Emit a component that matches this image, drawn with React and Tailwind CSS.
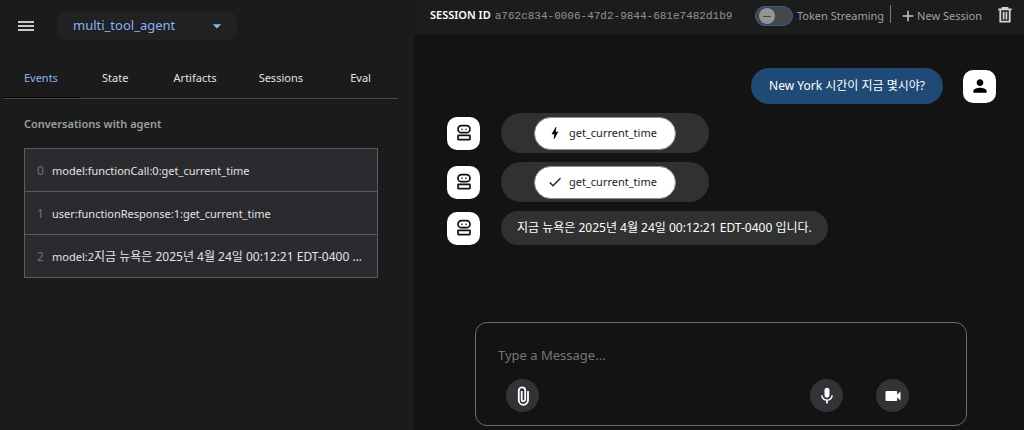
import React, { useState } from "react";
import { MdBolt, MdCheck, MdPerson, MdMic, MdVideocam, MdAdd, MdArrowDropDown } from "react-icons/md";

const TABS = [
  { name: "Events", width: "w-[76px]" },
  { name: "State", width: "w-[73px]" },
  { name: "Artifacts", width: "w-[87px]" },
  { name: "Sessions", width: "w-[85px]" },
  { name: "Eval", width: "w-[75px]" },
];

const EVENTS = [
  { source: "model:functionCall:0:get_current_time" },
  { source: "user:functionResponse:1:get_current_time" },
  { source: "model:2", message: "지금 뉴욕은 2025년 4월 24일 00:12:21 EDT-0400 ..." },
];

function RobotIcon() {
  return (
    <svg viewBox="0 0 16 18" className="h-[18px] w-4" fill="none" stroke="#111" strokeWidth="1.7" aria-hidden="true">
      <rect x="2" y="1.7" width="12" height="7" rx="3.5" />
      <rect x="2" y="11.4" width="12" height="4.2" rx="0.5" />
      <circle cx="6" cy="5.2" r="0.8" fill="#111" stroke="none" />
      <circle cx="10" cy="5.2" r="0.8" fill="#111" stroke="none" />
    </svg>
  );
}

function TrashIcon() {
  return (
    <svg viewBox="0 0 14 16" className="h-4 w-3.5" fill="none" stroke="#d6d6d6" strokeWidth="1.8" aria-hidden="true">
      <path d="M0.3 2.3H13.7M4.5 1.6V0.9H9.5V1.6M2.3 2.5V14.7H11.7V2.5M5.6 4.8V12.4M8.4 4.8V12.4" />
    </svg>
  );
}

function PaperclipIcon() {
  return (
    <svg viewBox="0 0 20 20" className="size-5" fill="none" stroke="currentColor" strokeWidth="1.8" aria-hidden="true">
      <path d="M15 5V14.2A4.6 4.6 0 0 1 5.8 14.2V4.6A3.2 3.2 0 0 1 12.2 4.6V13.4A1.75 1.75 0 0 1 8.7 13.4V5" />
    </svg>
  );
}

function Avatar({ children }) {
  return (
    <div className="flex size-[33px] shrink-0 items-center justify-center rounded-[10px] bg-white text-black">
      {children}
    </div>
  );
}

function ToolCall({ icon }) {
  return (
    <div className="flex items-center gap-[21px]">
      <Avatar><RobotIcon /></Avatar>
      <div className="flex h-10 items-center rounded-[20px] bg-[#303231] px-[33px]">
        <button type="button" className="flex h-[33px] w-[142px] items-center gap-1.5 rounded-full border border-[#8e8e8e] bg-white pl-3 text-[11px] text-[#222]">
          {icon}
          get_current_time
        </button>
      </div>
    </div>
  );
}

function RoundButton({ label, children }) {
  return (
    <button type="button" aria-label={label} className="flex size-[33px] items-center justify-center rounded-full bg-[#323336] text-white">
      {children}
    </button>
  );
}

export default function App() {
  const [tab, setTab] = useState("Events");
  return (
    <div className="flex min-h-screen bg-[#131313] font-['Noto_Sans','Noto_Sans_CJK_KR',sans-serif] text-[11px] text-[#e3e3e3]">
      <aside className="w-[414px] shrink-0 bg-[#1b1b1b]">
        <div className="flex items-center gap-[23px] pt-3 pl-[18px]">
          <button type="button" aria-label="Toggle side panel" className="flex w-4 flex-col gap-[2px]">
            <span className="h-[2px] w-full bg-[#c8c8c8]" />
            <span className="h-[2px] w-full bg-[#c8c8c8]" />
            <span className="h-[2px] w-full bg-[#c8c8c8]" />
          </button>
          <div className="relative">
            <select aria-label="Agent" className="h-7 w-[180px] appearance-none rounded-lg bg-[#212121] pl-4 text-[13px] text-[#8ab0f5]">
              <option>multi_tool_agent</option>
            </select>
            <MdArrowDropDown className="pointer-events-none absolute top-1 right-[10px] size-5 text-[#8ab4f8]" />
          </div>
        </div>

        <div role="tablist" className="mt-[17px] mr-4 ml-[3px] flex border-b border-[#444746]">
          {TABS.map((t) => (
            <button
              key={t.name}
              type="button"
              role="tab"
              aria-selected={tab === t.name}
              onClick={() => setTab(t.name)}
              className={`h-[41px] border-b pt-[2px] ${t.width} ${tab === t.name ? "border-black text-[#8ab0f5]" : "border-transparent"}`}
            >
              {t.name}
            </button>
          ))}
        </div>

        <h2 className="mt-[15px] ml-6 leading-5 font-semibold text-[#9aa0a6]">Conversations with agent</h2>
        <ol className="mt-[14px] mr-9 ml-6 border border-[#5c5c60]">
          {EVENTS.map((event, i) => (
            <li key={event.source} className="border-[#5c5c60] not-first:border-t">
              <button type="button" className="flex h-[42px] w-full items-center bg-[#2b2a2f] pt-[2px] pl-3 text-left whitespace-nowrap">
                <span className="w-[15px] text-xs text-[#70757a]">{i}</span>
                <span>
                  {event.source}
                  {event.message && <span className="text-xs">{event.message}</span>}
                </span>
              </button>
            </li>
          ))}
        </ol>
      </aside>

      <main className="flex min-w-0 flex-1 flex-col">
        <header className="flex h-[34px] items-center bg-[#1c1c1c] pr-3 pb-[2px] pl-4 whitespace-nowrap">
          <span className="pb-[2px] text-[11px] font-semibold text-white">SESSION ID</span>
          <span className="ml-1 font-['Liberation_Mono',monospace] text-[11px] text-[#8f9396]">a762c834-0006-47d2-9844-681e7482d1b9</span>
          <label className="ml-auto flex items-center gap-1 text-[#9aa0a6]">
            <span className="relative flex">
              <input type="checkbox" role="switch" className="h-5 w-[38px] appearance-none rounded-full border border-[#3a5ba8] bg-[#47474a]" />
              <span className="pointer-events-none absolute top-[2px] left-1 flex size-4 items-center justify-center rounded-full bg-[#949494]">
                <span className="h-px w-2 bg-[#4a4a4a]" />
              </span>
            </span>
            Token Streaming
          </label>
          <span className="mb-1 ml-1.5 h-[18px] w-px bg-[#777]" />
          <button type="button" className="ml-2 flex items-center text-[#9aa0a6]">
            <MdAdd className="size-[18px] text-[#c4c7c5]" />
            New Session
          </button>
          <button type="button" aria-label="Delete session" className="ml-4 pb-[2px]">
            <TrashIcon />
          </button>
        </header>

        <section className="flex flex-col gap-[9px] pt-[34px] pr-7 pl-[33px] text-xs">
          <div className="flex items-center justify-end gap-5">
            <p className="rounded-full bg-[#1f4a75] px-[18px] py-2 leading-5 text-white">New York 시간이 지금 몇시야?</p>
            <Avatar><MdPerson className="size-5" /></Avatar>
          </div>
          <ToolCall icon={<MdBolt className="size-4 text-black" />} />
          <ToolCall icon={<MdCheck className="size-4" />} />
          <div className="flex items-center gap-[21px]">
            <Avatar><RobotIcon /></Avatar>
            <p className="rounded-full bg-[#303231] px-4 py-[7px] leading-5 text-white">지금 뉴욕은 2025년 4월 24일 00:12:21 EDT-0400 입니다.</p>
          </div>
        </section>

        <form className="mt-auto mr-[57px] mb-1 ml-[61px] rounded-xl border border-[#6b6b6b] px-[22px] pt-[22px] pb-[13px]">
          <input
            type="text"
            aria-label="Message"
            placeholder="Type a Message..."
            className="block h-5 w-full bg-transparent text-[13px] text-white placeholder:text-[#757575] placeholder:opacity-100"
          />
          <div className="mt-[14px] flex items-center pr-[35px] pl-2">
            <RoundButton label="Attach file"><PaperclipIcon /></RoundButton>
            <div className="ml-auto flex gap-[33px]">
              <RoundButton label="Use microphone"><MdMic className="size-5" /></RoundButton>
              <RoundButton label="Use camera"><MdVideocam className="size-5" /></RoundButton>
            </div>
          </div>
        </form>
      </main>
    </div>
  );
}
